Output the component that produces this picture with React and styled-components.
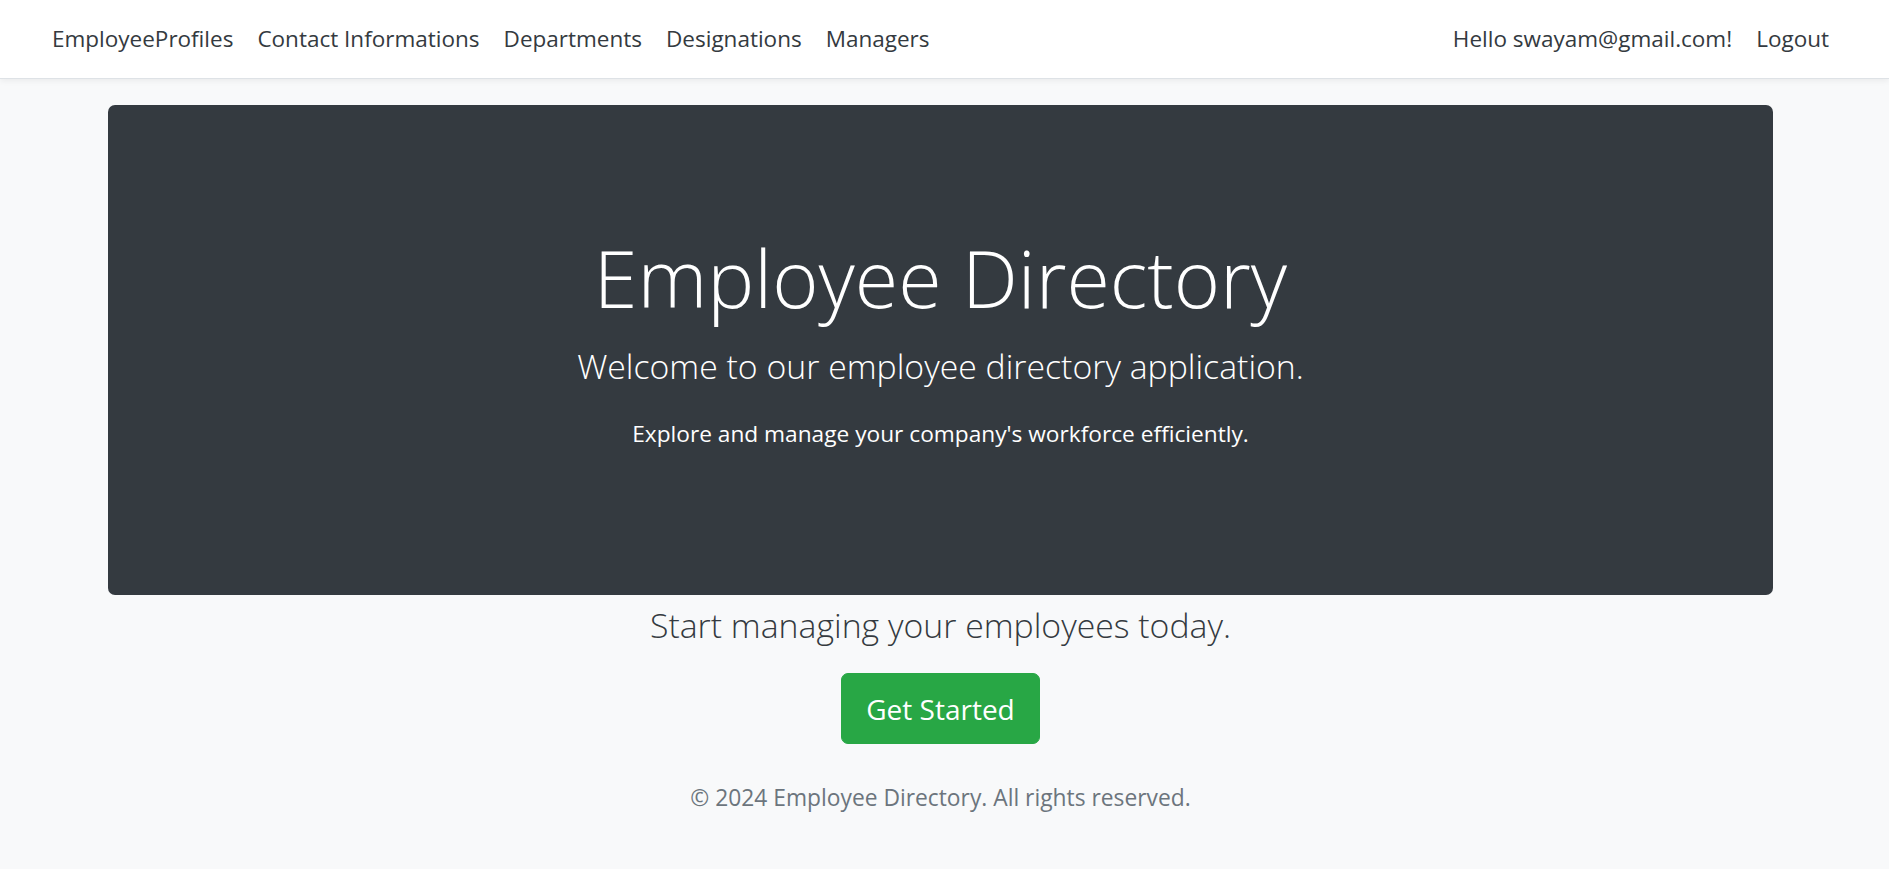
import React from 'react';
import styled, { createGlobalStyle } from 'styled-components';

const GlobalStyle = createGlobalStyle`
  body {
    margin: 0;
    background-color: #f8f9fa;
    font-family: "Open Sans", "Noto Sans", sans-serif;
    color: #212529;
  }
`;

const Navbar = styled.nav`
  display: flex;
  align-items: center;
  justify-content: space-between;
  height: 78px;
  padding: 0 48px 0 40px;
  background-color: #fff;
  border-bottom: 1px solid #dee2e6;
  box-shadow: 0 2px 6px rgba(0, 0, 0, 0.06);
`;

const NavList = styled.div`
  display: flex;
  align-items: center;
`;

const NavLink = styled.a`
  padding: 0 12px;
  font-size: 22.5px;
  line-height: 36px;
  color: #343a40;
  text-decoration: none;
  cursor: pointer;
  white-space: nowrap;
`;

const Main = styled.main`
  width: 1665px;
  margin: 26px 0 0 108px;
  display: flex;
  flex-direction: column;
  align-items: center;
`;

const Hero = styled.section`
  box-sizing: border-box;
  width: 100%;
  height: 490px;
  padding-top: 122px;
  background-color: #343a40;
  border-radius: 7px;
  color: #fff;
  text-align: center;
`;

const Title = styled.h1`
  margin: 0;
  font-size: 79px;
  font-weight: 300;
  line-height: 101px;
`;

const Lead = styled.p`
  margin: ${(p) => p.$mt || 0}px 0 0;
  font-size: 33.8px;
  font-weight: 300;
  line-height: 46px;
  color: ${(p) => p.$color || 'inherit'};
`;

const Tagline = styled.p`
  margin: 27px 0 0;
  font-size: 22.7px;
  line-height: 36px;
`;

const Button = styled.button`
  margin-top: 25px;
  height: 71px;
  padding: 0 24px;
  font-family: inherit;
  font-size: 28px;
  color: #fff;
  background-color: #28a745;
  border: 1px solid #28a745;
  border-radius: 7px;
  cursor: pointer;
`;

const Footer = styled.footer`
  margin-top: 36px;
  font-size: 22.8px;
  line-height: 36px;
  color: #6c757d;
`;

const links = ['EmployeeProfiles', 'Contact Informations', 'Departments', 'Designations', 'Managers'];

export default function App() {
  return (
    <>
      <GlobalStyle />
      <Navbar>
        <NavList>
          {links.map((l) => (
            <NavLink key={l}>{l}</NavLink>
          ))}
        </NavList>
        <NavList>
          <NavLink>Hello swayam@gmail.com!</NavLink>
          <NavLink>Logout</NavLink>
        </NavList>
      </Navbar>
      <Main>
        <Hero>
          <Title>Employee Directory</Title>
          <Lead $mt={15}>Welcome to our employee directory application.</Lead>
          <Tagline>Explore and manage your company's workforce efficiently.</Tagline>
        </Hero>
        <Lead $mt={7} $color="#343a40">Start managing your employees today.</Lead>
        <Button>Get Started</Button>
        <Footer>© 2024 Employee Directory. All rights reserved.</Footer>
      </Main>
    </>
  );
}
